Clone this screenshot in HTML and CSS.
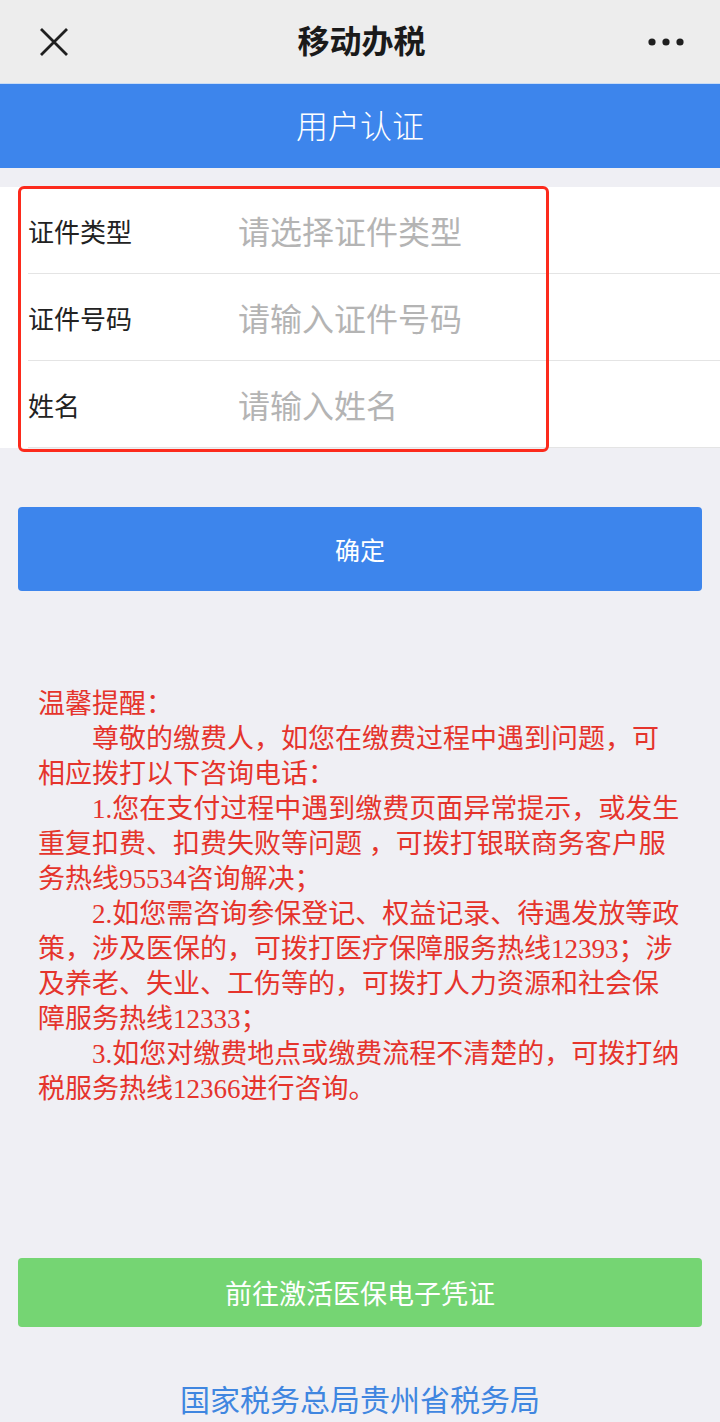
FILE: index.html
```html
<!DOCTYPE html>
<html lang="zh-CN">
<head>
  <meta charset="UTF-8">
  <meta name="viewport" content="width=device-width, initial-scale=1.0">
  <title>移动办税</title>
  <link rel="stylesheet" href="styles.css">
</head>
<body>
  <!-- Верхняя панель -->
  <header class="navbar">
    <span class="nav-close">
      <svg width="30" height="30" viewBox="0 0 30 30"><path d="M2 2 L28 28 M28 2 L2 28" stroke="#1f1f1f" stroke-width="2.8" fill="none"/></svg>
    </span>
    <h1 class="nav-title">移动办税</h1>
    <span class="nav-more">
      <svg width="36" height="8" viewBox="0 0 36 8"><circle cx="4" cy="4" r="3.6" fill="#1f1f1f"/><circle cx="18" cy="4" r="3.6" fill="#1f1f1f"/><circle cx="32" cy="4" r="3.6" fill="#1f1f1f"/></svg>
    </span>
  </header>

  <div class="banner">用户认证</div>

  <!-- Форма -->
  <div class="form">
    <div class="form-row">
      <label class="form-label">证件类型</label>
      <input class="form-input" type="text" placeholder="请选择证件类型" readonly>
    </div>
    <div class="form-row">
      <label class="form-label">证件号码</label>
      <input class="form-input" type="text" placeholder="请输入证件号码">
    </div>
    <div class="form-row">
      <label class="form-label">姓名</label>
      <input class="form-input" type="text" placeholder="请输入姓名">
    </div>
    <div class="form-mark"></div>
  </div>

  <div class="btn btn-confirm">确定</div>

  <!-- Подсказка -->
  <div class="notice">
    <p>温馨提醒：</p>
    <p class="indent">尊敬的缴费人，如您在缴费过程中遇到问题，可相应拨打以下咨询电话：</p>
    <p class="indent">1.您在支付过程中遇到缴费页面异常提示，或发生重复扣费、扣费失败等问题 ，可拨打银联商务客户服务热线95534咨询解决；</p>
    <p class="indent">2.如您需咨询参保登记、权益记录、待遇发放等政策，涉及医保的，可拨打医疗保障服务热线12393；涉及养老、失业、工伤等的，可拨打人力资源和社会保障服务热线12333；</p>
    <p class="indent">3.如您对缴费地点或缴费流程不清楚的，可拨打纳税服务热线12366进行咨询。</p>
  </div>

  <div class="btn btn-green">前往激活医保电子凭证</div>

  <div class="footer">国家税务总局贵州省税务局</div>
</body>
</html>
```

FILE: styles.css
```css
/* Базовые стили */
* { box-sizing: border-box; }
html, body {
  margin: 0; padding: 0;
  width: 100%;
}
body {
  background: #efeff4;
  font-family: "Noto Sans CJK SC", "Noto Sans", sans-serif;
  color: #222;
  height: 1422px;
  overflow: hidden;
}

/* Верхняя панель */
.navbar {
  height: 84px;
  background: #ededed;
  display: grid;
  grid-template-columns: 1fr auto 1fr;
  align-items: center;
  padding: 0 36px 0 39px;
  border-bottom: 1px solid #c9dcf5;
}
.nav-close { display: flex; }
.nav-title {
  margin: 0 0 6px;
  font-size: 32px;
  font-weight: 700;
  color: #1a1a1a;
  line-height: 1;
}
.nav-more { display: flex; justify-content: flex-end; }

/* Синяя полоса */
.banner {
  height: 84px;
  padding-bottom: 4px;
  background: #3d85ec;
  color: #fff;
  font-size: 32px;
  font-weight: 300;
  display: flex;
  align-items: center;
  justify-content: center;
}

/* Форма */
.form {
  margin-top: 19px;
  background: #fff;
  position: relative;
}
.form-row {
  height: 87px;
  margin-left: 28px;
  display: flex;
  align-items: center;
  border-bottom: 1px solid #e4e4e4;
}
.form-row:last-of-type { border-bottom: none; height: 86px; }
.form-label {
  width: 210px;
  font-size: 26px;
  color: #222;
}
.form-input {
  flex: 1;
  border: none;
  outline: none;
  padding: 0;
  background: transparent;
  font-family: inherit;
  font-size: 32px;
  color: #333;
}
.form-input::placeholder { color: #b4b4b4; }
/* Красная рамка поверх полей */
.form-mark {
  position: absolute;
  left: 18px;
  top: -1px;
  width: 531px;
  height: 266px;
  border: 3px solid #fc2a1c;
  border-radius: 6px;
  pointer-events: none;
}

/* Кнопки */
.btn {
  margin: 0 18px;
  border-radius: 4px;
  color: #fff;
  display: flex;
  align-items: center;
  justify-content: center;
}
.btn-confirm {
  margin-top: 59px;
  height: 84px;
  background: #3d85ec;
  font-size: 25px;
}
.btn-green {
  margin-top: 151px;
  height: 69px;
  background: #75d573;
  font-size: 27px;
}

/* Подсказка */
.notice {
  margin-top: 96px;
  padding: 0 36px 0 38px;
  color: #e5342c;
  font-family: "Liberation Serif", "Noto Sans CJK SC", serif;
  font-size: 27px;
  line-height: 35px;
}
.notice p { margin: 0; }
.notice .indent { text-indent: 2em; }

/* Подвал */
.footer {
  margin-top: 51px;
  text-align: center;
  font-size: 30px;
  line-height: 40px;
  color: #3f86e0;
}
```
